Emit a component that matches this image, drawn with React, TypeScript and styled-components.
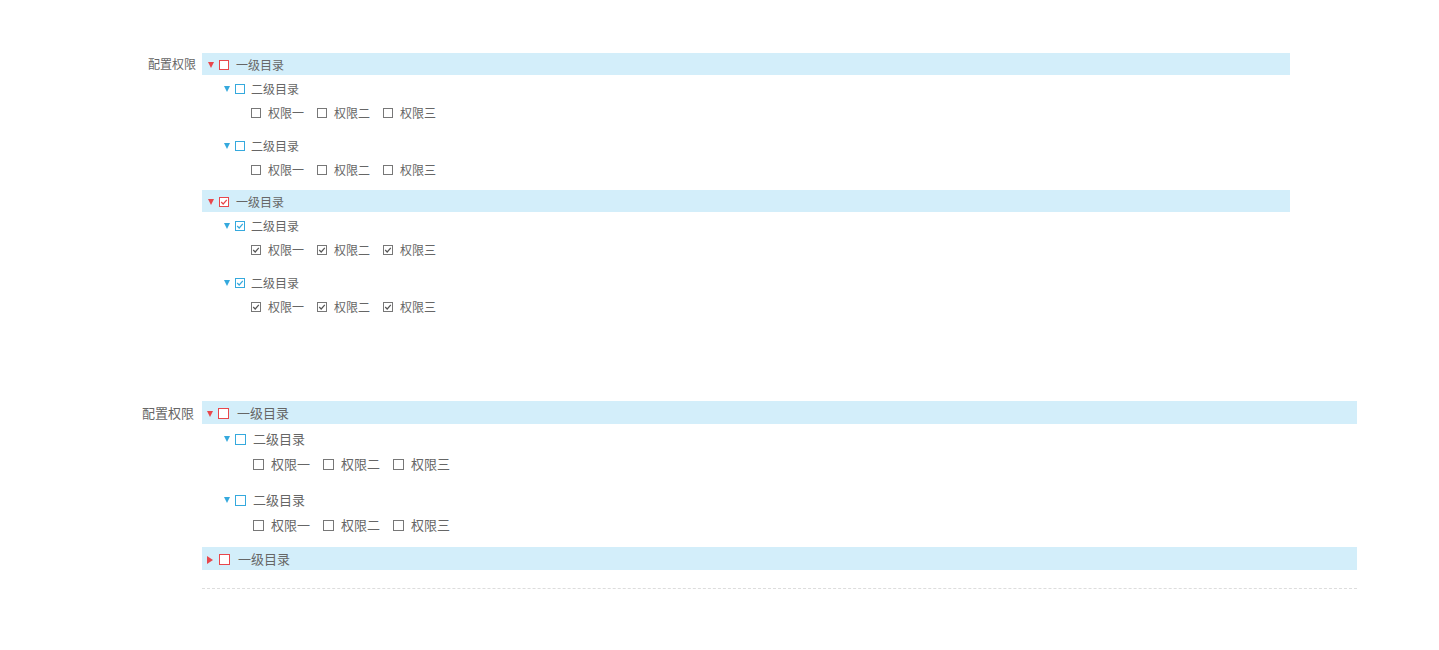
import styled, { createGlobalStyle } from 'styled-components';

const GlobalStyle = createGlobalStyle`
    html, body {
        margin: 0;
        padding: 0;
        background: #fff;
    }

    body {
        font-family: "Noto Sans CJK SC", "Noto Sans", sans-serif;
        color: #666;
    }
`;

interface Size {
    font: number;
    barH: number;
    rowH: number;
    permH: number;
    groupGap: number;
    box: number;
    barPad: number;
    barTextGap: number;
    l2Pad: number;
    l2TextGap: number;
    permPad: number;
    permGap: number;
    width: number;
    labelPad: number;
    dashed?: boolean;
}

const small: Size = {
    font: 12, barH: 22, rowH: 24, permH: 24, groupGap: 9, box: 10,
    barPad: 5, barTextGap: 7, l2Pad: 22, l2TextGap: 6, permPad: 49, permGap: 13,
    width: 1088, labelPad: 0,
};

const medium: Size = {
    font: 13, barH: 23, rowH: 26, permH: 25, groupGap: 10, box: 11,
    barPad: 4, barTextGap: 8, l2Pad: 22, l2TextGap: 7, permPad: 51, permGap: 13,
    width: 1155, labelPad: 2, dashed: true,
};

const RED = '#e8474c';
const BLUE = '#35a9dd';
const GRAY = '#555';

const Page = styled.div`
    display: flex;
    flex-direction: column;
    gap: 74px;
    padding: 53px 0 40px 140px;
`;

const Section = styled.div<{ $s: Size }>`
    display: flex;
    align-items: flex-start;
    gap: 6px;
    font-size: ${({ $s }) => $s.font}px;
`;

const Label = styled.div<{ $s: Size }>`
    width: 56px;
    box-sizing: border-box;
    padding-right: ${({ $s }) => $s.labelPad}px;
    text-align: right;
    line-height: ${({ $s }) => $s.barH}px;
    white-space: nowrap;
    color: #666;
`;

const Tree = styled.div<{ $s: Size }>`
    width: ${({ $s }) => $s.width}px;
`;

const Dashed = styled.div`
    margin-top: 18px;
    border-top: 1px dashed #ddd;
`;

const Bar = styled.div<{ $s: Size }>`
    display: flex;
    align-items: center;
    height: ${({ $s }) => $s.barH}px;
    padding-left: ${({ $s }) => $s.barPad + 1}px;
    background: #d3eefa;
`;

const Row = styled.div<{ $s: Size }>`
    display: flex;
    align-items: center;
    height: ${({ $s }) => $s.rowH}px;
    padding-left: ${({ $s }) => $s.l2Pad}px;
`;

const Children = styled.div<{ $s: Size }>`
    display: flex;
    flex-direction: column;
    gap: ${({ $s }) => $s.groupGap}px;
    padding: 1px 0 ${({ $s }) => $s.groupGap}px;
`;

const PermRow = styled.div<{ $s: Size }>`
    display: flex;
    align-items: center;
    gap: ${({ $s }) => $s.permGap}px;
    height: ${({ $s }) => $s.permH}px;
    padding-left: ${({ $s }) => $s.permPad}px;
`;

const Perm = styled.label`
    display: flex;
    align-items: center;
    gap: 7px;
    color: #666;
`;

const Arrow = styled.span<{ $color: string; $open: boolean }>`
    width: 0;
    height: 0;
    margin-right: 5px;
    ${({ $color, $open }) => $open
        ? `border-left: 3.5px solid transparent; border-right: 3.5px solid transparent; border-top: 6px solid ${$color}; margin-top: 2px;`
        : `border-top: 4px solid transparent; border-bottom: 4px solid transparent; border-left: 6px solid ${$color}; margin-top: 2px; margin-right: 6px;`}
`;

const BoxFrame = styled.span<{ $size: number; $color: string }>`
    display: block;
    flex: none;
    box-sizing: border-box;
    width: ${({ $size }) => $size}px;
    height: ${({ $size }) => $size}px;
    margin-top: 2px;
    border: 1px solid ${({ $color }) => $color};
    background: #fff;

    svg {
        display: block;
    }
`;

const Title = styled.span<{ $gap: number }>`
    margin-left: ${({ $gap }) => $gap}px;
    color: #666;
    white-space: nowrap;
`;

function Box({ size, color, checked, checkColor }: { size: number; color: string; checked?: boolean; checkColor?: string }) {
    const inner = size - 2;
    const k = inner / 8;
    return (
        <BoxFrame $size={size} $color={color}>
            {checked && (
                <svg width={inner} height={inner} viewBox={`0 0 ${inner} ${inner}`}>
                    <polyline
                        points={`${1.2 * k},${4 * k} ${3.2 * k},${6 * k} ${6.8 * k},${1.8 * k}`}
                        fill="none"
                        stroke={checkColor || color}
                        strokeWidth="1.2"
                    />
                </svg>
            )}
        </BoxFrame>
    );
}

interface Group {
    checked: boolean;
}

interface TopNode {
    open: boolean;
    checked: boolean;
    groups: Group[];
}

const perms = ['权限一', '权限二', '权限三'];

function Level2({ s, group }: { s: Size; group: Group }) {
    return (
        <div>
            <Row $s={s}>
                <Arrow $color={BLUE} $open />
                <Box size={s.box} color={BLUE} checked={group.checked} />
                <Title $gap={s.l2TextGap}>二级目录</Title>
            </Row>
            <PermRow $s={s}>
                {perms.map((p) => (
                    <Perm key={p}>
                        <Box size={s.box} color="#777" checked={group.checked} checkColor={GRAY} />
                        <span>{p}</span>
                    </Perm>
                ))}
            </PermRow>
        </div>
    );
}

function Permissions({ s, nodes }: { s: Size; nodes: TopNode[] }) {
    return (
        <Section $s={s}>
            <Label $s={s}>配置权限</Label>
            <Tree $s={s}>
                {nodes.map((node, i) => (
                    <div key={i}>
                        <Bar $s={s}>
                            <Arrow $color={RED} $open={node.open} />
                            <Box size={s.box} color={RED} checked={node.checked} />
                            <Title $gap={s.barTextGap}>一级目录</Title>
                        </Bar>
                        {node.open && (
                            <Children $s={s}>
                                {node.groups.map((g, j) => <Level2 key={j} s={s} group={g} />)}
                            </Children>
                        )}
                    </div>
                ))}
                {s.dashed && <Dashed />}
            </Tree>
        </Section>
    );
}

const first: TopNode[] = [
    { open: true, checked: false, groups: [{ checked: false }, { checked: false }] },
    { open: true, checked: true, groups: [{ checked: true }, { checked: true }] },
];

const second: TopNode[] = [
    { open: true, checked: false, groups: [{ checked: false }, { checked: false }] },
    { open: false, checked: false, groups: [] },
];

export default function App() {
    return (
        <>
            <GlobalStyle />
            <Page>
                <Permissions s={small} nodes={first} />
                <Permissions s={medium} nodes={second} />
            </Page>
        </>
    );
}
